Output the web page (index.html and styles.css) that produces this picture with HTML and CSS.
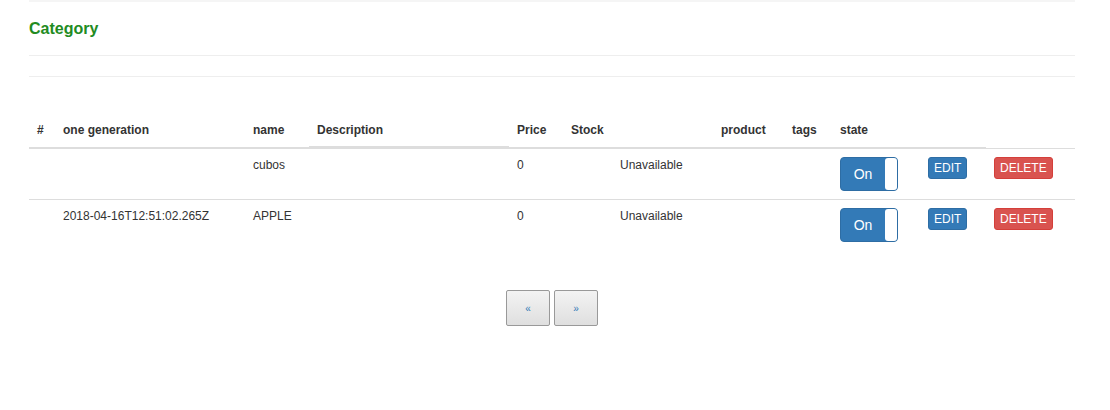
FILE: index.html
```html
<!DOCTYPE html>
<html>
<head>
<meta charset="utf-8">
<link rel="stylesheet" href="styles.css">
</head>
<body>
<div class="page">
  <div class="top-rule"></div>
  <h3 class="title">Category</h3>
  <hr class="rule rule-a">
  <hr class="rule rule-b">
  <table class="grid">
    <colgroup>
      <col class="c-num"><col class="c-gen"><col class="c-name"><col class="c-desc"><col class="c-price"><col class="c-stock"><col class="c-avail"><col class="c-prod"><col class="c-tags"><col class="c-state"><col class="c-edit"><col class="c-del">
    </colgroup>
    <thead>
      <tr>
        <th>#</th><th>one generation</th><th>name</th><th class="desc-h">Description</th><th>Price</th><th>Stock</th><th></th><th>product</th><th>tags</th><th>state</th><th></th>
      </tr>
    </thead>
    <tbody>
      <tr>
        <td></td><td></td><td>cubos</td><td></td><td class="num">0</td><td></td><td>Unavailable</td><td></td><td></td>
        <td><span class="toggle"><span class="toggle-on">On</span><span class="toggle-handle"></span></span></td>
        <td><button class="btn btn-edit">EDIT</button></td>
        <td><button class="btn btn-del">DELETE</button></td>
      </tr>
      <tr>
        <td></td><td>2018-04-16T12:51:02.265Z</td><td>APPLE</td><td></td><td class="num">0</td><td></td><td>Unavailable</td><td></td><td></td>
        <td><span class="toggle"><span class="toggle-on">On</span><span class="toggle-handle"></span></span></td>
        <td><button class="btn btn-edit">EDIT</button></td>
        <td><button class="btn btn-del">DELETE</button></td>
      </tr>
    </tbody>
  </table>
  <div class="pager">
    <button class="pg">&laquo;</button>
    <button class="pg">&raquo;</button>
  </div>
</div>
</body>
</html>
```

FILE: styles.css
```css
html, body {
  margin: 0;
  padding: 0;
  background: #fff;
}
body {
  font-family: "Liberation Sans", Arial, sans-serif;
  font-size: 12px;
  color: #333;
}
.page {
  margin: 0 35px 0 29px;
}
.top-rule {
  height: 2px;
  background: #f5f5f5;
}
.title {
  margin: 16px 0 0 0;
  height: 21px;
  font-size: 16px;
  line-height: 21px;
  font-weight: bold;
  color: #228b22;
}
.rule {
  border: 0;
  border-top: 1px solid #eee;
  margin: 0;
}
.rule-a {
  margin-top: 16px;
}
.rule-b {
  margin-top: 20px;
}
.grid {
  margin-top: 37px;
  width: 100%;
  border-collapse: collapse;
  table-layout: fixed;
}
.c-num { width: 26px; }
.c-gen { width: 190px; }
.c-name { width: 64px; }
.c-desc { width: 200px; }
.c-price { width: 54px; }
.c-stock { width: 49px; }
.c-avail { width: 101px; }
.c-prod { width: 71px; }
.c-tags { width: 48px; }
.c-state { width: 88px; }
.c-edit { width: 66px; }
.c-del { width: auto; }
.grid th {
  text-align: left;
  font-weight: bold;
  padding: 8px;
  line-height: 17px;
  vertical-align: bottom;
  border-bottom: 2px solid #ddd;
  white-space: nowrap;
}
.grid th.desc-h {
  border-bottom-width: 2px;
  box-shadow: inset 0 -1px 0 #ddd;
}
.grid td {
  padding: 8px;
  line-height: 17px;
  vertical-align: top;
  border-top: 1px solid #ddd;
  white-space: nowrap;
}
.grid tbody tr:first-child td {
  border-top: 0;
}
.grid tbody tr:first-child td:nth-child(n+11) {
  border-top: 1px solid #ddd;
}
.num {
  color: #333;
}
.toggle {
  display: flex;
  width: 58px;
  height: 34px;
  box-sizing: border-box;
  border: 1px solid #2e6da4;
  border-radius: 4px;
  background: #337ab7;
  overflow: hidden;
}
.toggle-on {
  flex: 1;
  color: #fff;
  font-size: 14px;
  line-height: 32px;
  text-align: center;
}
.toggle-handle {
  width: 12px;
  background: #fff;
  border-radius: 3px 0 0 3px;
}
.btn {
  font-family: "Liberation Sans", Arial, sans-serif;
  font-size: 12px;
  line-height: 16px;
  padding: 2px 5px 2px 5px;
  border-radius: 3px;
  color: #fff;
  border: 1px solid transparent;
  height: 22px;
  box-sizing: border-box;
  cursor: pointer;
}
.btn-edit {
  background: #337ab7;
  border-color: #2e6da4;
}
.btn-del {
  background: #d9534f;
  border-color: #d43f3a;
}
.pager {
  display: flex;
  justify-content: center;
  gap: 4px;
  margin-top: 40px;
}
.pg {
  width: 44px;
  height: 36px;
  border: 1px solid #999;
  border-radius: 2px;
  background: linear-gradient(#f3f3f3, #dfdfdf);
  color: #337ab7;
  font-family: "Liberation Sans", Arial, sans-serif;
  font-size: 10px;
  padding: 0;
}
```
